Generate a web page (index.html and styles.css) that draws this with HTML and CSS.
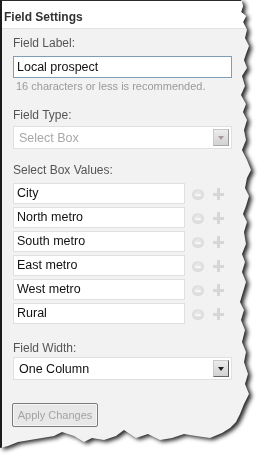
FILE: index.html
```html
<!DOCTYPE html>
<html lang="en">
<head>
    <meta charset="UTF-8">
    <meta name="viewport" content="width=device-width, initial-scale=1.0">
    <title>Field Settings</title>
    <link rel="stylesheet" href="styles.css">
</head>
<body>

<div class="shadow">
    <div class="panel">
        <div class="panel-head">Field Settings</div>

        <div class="panel-body">
            <!-- Label -->
            <div class="lbl">Field Label:</div>
            <div class="field focus">Local prospect</div>
            <div class="hint">16 characters or less is recommended.</div>

            <!-- Type -->
            <div class="lbl lbl-type">Field Type:</div>
            <div class="dropdown disabled">
                <span>Select Box</span>
                <span class="arrow"><i></i></span>
            </div>

            <!-- Values -->
            <div class="lbl lbl-values">Select Box Values:</div>
            <div class="value-list">
                <div class="value-row">
                    <div class="field small">City</div>
                    <span class="btn-minus"></span><span class="btn-plus"></span>
                </div>
                <div class="value-row">
                    <div class="field small">North metro</div>
                    <span class="btn-minus"></span><span class="btn-plus"></span>
                </div>
                <div class="value-row">
                    <div class="field small">South metro</div>
                    <span class="btn-minus"></span><span class="btn-plus"></span>
                </div>
                <div class="value-row">
                    <div class="field small">East metro</div>
                    <span class="btn-minus"></span><span class="btn-plus"></span>
                </div>
                <div class="value-row">
                    <div class="field small">West metro</div>
                    <span class="btn-minus"></span><span class="btn-plus"></span>
                </div>
                <div class="value-row">
                    <div class="field small">Rural</div>
                    <span class="btn-minus"></span><span class="btn-plus"></span>
                </div>
            </div>

            <!-- Width -->
            <div class="lbl lbl-width">Field Width:</div>
            <div class="dropdown">
                <span>One Column</span>
                <span class="arrow"><i></i></span>
            </div>

            <button class="apply-btn" disabled>Apply Changes</button>
        </div>
    </div>
</div>

</body>
</html>
```

FILE: styles.css
```css
body {
    margin: 0;
    background: #fff;
    font-family: "Liberation Sans", Arial, sans-serif;
}
.shadow {
    width: 260px;
    height: 457px;
    filter: drop-shadow(3px 2px 2px rgba(0, 0, 0, 0.85));
}
.panel {
    width: 252px;
    height: 450px;
    box-sizing: border-box;
    background: #f2f2f2;
    border-left: 2px solid #1c1c1c;
    border-top: 1px solid #2a2a2a;
    /* torn paper edge on the right and bottom */
    clip-path: polygon(0 0, 241px 0, 243px 6px, 241px 12px, 246px 16px, 243px 22px, 247px 30px, 245px 38px, 249px 46px, 246px 54px, 244px 60px, 247px 68px, 242px 76px, 245px 86px, 241px 95px, 246px 104px, 243px 112px, 247px 120px, 244px 130px, 246px 140px, 242px 150px, 247px 160px, 251px 170px, 247px 178px, 245px 188px, 249px 196px, 246px 206px, 243px 214px, 247px 222px, 244px 232px, 246px 244px, 242px 254px, 245px 262px, 242px 272px, 246px 282px, 243px 292px, 240px 302px, 244px 310px, 241px 320px, 245px 330px, 242px 342px, 246px 352px, 244px 362px, 248px 374px, 245px 384px, 249px 394px, 244px 404px, 240px 414px, 236px 422px, 230px 428px, 222px 433px, 210px 438px, 196px 436px, 184px 434px, 172px 438px, 160px 440px, 148px 434px, 136px 438px, 124px 430px, 116px 436px, 104px 440px, 92px 438px, 84px 442px, 74px 436px, 62px 432px, 54px 436px, 42px 438px, 30px 440px, 18px 442px, 8px 446px, 0 448px);
}
.panel-head {
    background: #fff;
    border-bottom: 1px solid #e2e2e2;
    height: 28px;
    box-sizing: border-box;
    padding: 9px 0 0 2px;
    font-size: 12px;
    line-height: 14px;
    font-weight: bold;
    color: #333;
}
.panel-body {
    padding: 7px 0 0 11px;
}
.lbl {
    font-size: 12px;
    line-height: 14px;
    color: #555;
}
.lbl-type {
    margin-top: 15px;
}
.lbl-values {
    margin-top: 14px;
}
.lbl-width {
    margin-top: 17px;
}
.field {
    width: 219px;
    height: 22px;
    box-sizing: border-box;
    margin-top: 6px;
    padding: 0 3px;
    background: #fff;
    border: 1px solid #e0e0e0;
    font-size: 12.5px;
    line-height: 20px;
    color: #111;
}
.field.focus {
    border-color: #7d9db8;
}
.field.small {
    width: 172px;
    height: 21px;
    margin-top: 0;
    line-height: 19px;
}
.hint {
    margin-top: 2px;
    padding-left: 3px;
    font-size: 11px;
    line-height: 13px;
    color: #9a9a9a;
}
.dropdown {
    width: 219px;
    height: 23px;
    box-sizing: border-box;
    margin-top: 4px;
    padding: 0 2px 0 5px;
    background: #fff;
    border: 1px solid #e0e0e0;
    display: flex;
    align-items: center;
    justify-content: space-between;
    font-size: 12.5px;
    color: #111;
}
.dropdown.disabled {
    color: #a8a8a8;
}
.lbl-width + .dropdown {
    margin-top: 2px;
}
.arrow {
    width: 16px;
    height: 17px;
    box-sizing: border-box;
    background: linear-gradient(#ececec, #d2d2d2);
    border: 1px solid #c8c8c8;
    border-right-color: #555;
    border-bottom-color: #666;
    display: flex;
    align-items: center;
    justify-content: center;
}
.arrow i {
    width: 0;
    height: 0;
    border-left: 3px solid transparent;
    border-right: 3px solid transparent;
    border-top: 4px solid #222;
}
.disabled .arrow {
    border-right-color: #999;
    border-bottom-color: #aaa;
}
.disabled .arrow i {
    border-top-color: #a89a9a;
}
.value-list {
    margin-top: 6px;
    display: flex;
    flex-direction: column;
    gap: 3px;
}
.value-row {
    display: flex;
    align-items: center;
}
.btn-minus {
    width: 12px;
    height: 11px;
    margin: 2px 0 0 7px;
    border-radius: 50%;
    background: radial-gradient(circle at 50% 40%, #e8e8e8, #d6d6d6);
    position: relative;
}
.btn-minus::after {
    content: "";
    position: absolute;
    left: 3px;
    right: 3px;
    top: 5px;
    height: 2px;
    background: #f6f6f6;
}
.btn-plus {
    width: 11px;
    height: 12px;
    margin: 1px 0 0 9px;
    position: relative;
}
.btn-plus::before,
.btn-plus::after {
    content: "";
    position: absolute;
    background: #d6d6d6;
}
.btn-plus::before {
    left: 4px;
    width: 3px;
    top: 0;
    bottom: 0;
}
.btn-plus::after {
    top: 5px;
    height: 3px;
    left: 0;
    right: 0;
}
.apply-btn {
    display: block;
    margin: 23px 0 0 -1px;
    width: 86px;
    height: 24px;
    padding: 0;
    background: #e8e8e8;
    border: 1px solid #7a7a7a;
    border-radius: 2px;
    box-shadow: inset 0 0 0 1px #f6f6f6;
    font-family: "Liberation Sans", Arial, sans-serif;
    font-size: 11px;
    color: #a3a3a3;
}
```
